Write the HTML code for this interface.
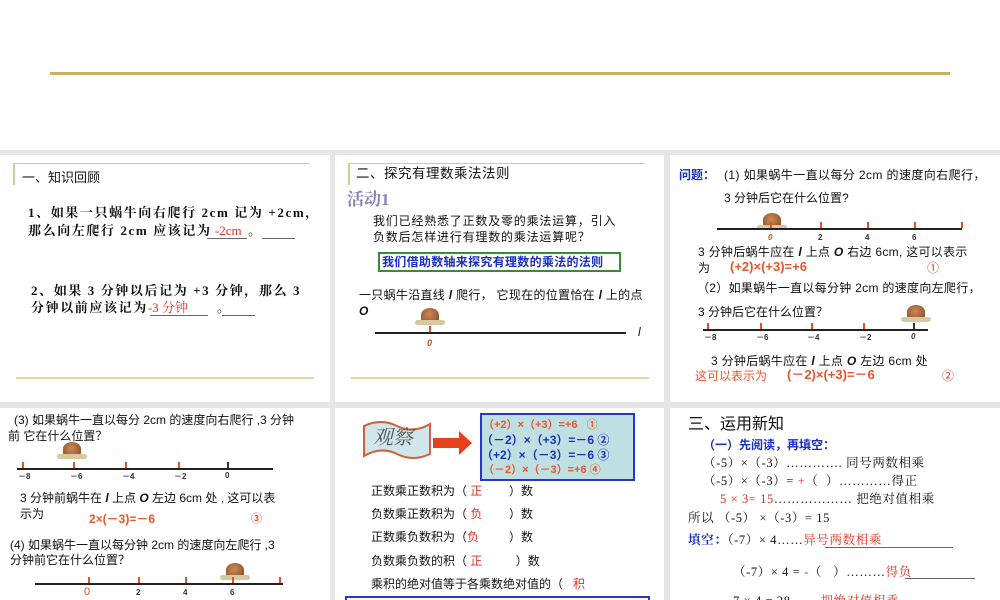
<!DOCTYPE html>
<html><head><meta charset="utf-8"><style>
*{margin:0;padding:0;box-sizing:border-box}
body{width:1000px;height:600px;overflow:hidden;background:#fff;font-family:"Liberation Sans","Noto Sans CJK SC",sans-serif;position:relative;color:#111}
.bg{position:absolute;left:0;top:150px;width:1000px;height:450px;background:#e6e6e6}
.p{position:absolute;background:#fff;overflow:hidden}
.t{position:absolute;white-space:nowrap;font-size:12px;line-height:14px}
.s{font-family:"Liberation Serif","Noto Serif CJK SC",serif;font-weight:bold;font-size:13px;letter-spacing:1.6px}
.r{color:#e0301e}
.o{color:#e8552a;font-weight:bold}
.b{color:#1a2fc0}
.g{position:absolute;height:2px;background:#e6d6a6}
.ax{position:absolute;height:1.5px;background:#222}
.tk{position:absolute;width:1.5px;height:6px;background:#e0502a}
.lb{position:absolute;font-size:8px;font-weight:bold;color:#333}
.snail{position:absolute;width:18px;height:14px;border-radius:50% 50% 20% 20%;background:radial-gradient(circle at 45% 45%,#c98a5a,#8a4a22);}
.snail:after{content:"";position:absolute;left:-6px;bottom:-3px;width:30px;height:5px;background:#d8c8a0;border-radius:3px}
.ul{position:absolute;height:1px;background:#667}
.sf{font-family:"Liberation Serif","Noto Serif CJK SC",serif;font-size:12.5px;letter-spacing:0.6px}
</style></head><body>
<div style="position:absolute;left:50px;top:72px;width:900px;height:3px;background:#c8b060"></div>
<div class="bg"></div>

<!-- panel 1 -->
<div class="p" style="left:0;top:155px;width:330px;height:247px">
 <div class="g" style="left:13px;top:8px;width:297px;height:1px;background:#dcc890"></div>
 <div class="g" style="left:13px;top:8px;width:1.5px;height:22px;background:#dcc890"></div>
 <div class="t" style="left:22px;top:16px;font-size:13px">一、知识回顾</div>
 <div class="t s" style="left:28px;top:51px">1、如果一只蜗牛向右爬行 2cm 记为 +2cm，</div>
 <div class="t s" style="left:28px;top:69px">那么向左爬行 2cm 应该记为<span class="r" style="font-weight:normal;letter-spacing:0">&nbsp;-2cm&nbsp;&nbsp;</span>。</div>
 <div class="ul" style="left:207px;top:83px;width:40px"></div>
 <div class="ul" style="left:262px;top:83px;width:33px"></div>
 <div class="t s" style="left:31px;top:129px">2、如果 3 分钟以后记为 +3 分钟，那么 3</div>
 <div class="t s" style="left:31px;top:146px">分钟以前应该记为<span class="r" style="font-weight:normal;letter-spacing:0">-3 分钟</span>&nbsp;&nbsp;&nbsp;&nbsp;&nbsp;&nbsp;。</div>
 <div class="ul" style="left:150px;top:160px;width:58px"></div>
 <div class="ul" style="left:222px;top:160px;width:33px"></div>
 <div class="g" style="left:16px;top:222px;width:298px"></div>
</div>

<!-- panel 2 -->
<div class="p" style="left:335px;top:155px;width:329px;height:247px">
 <div class="g" style="left:13px;top:8px;width:297px;height:1px;background:#dcc890"></div>
 <div class="g" style="left:13px;top:8px;width:1.5px;height:22px;background:#dcc890"></div>
 <div class="t" style="left:21px;top:12px;font-size:13.5px;letter-spacing:0.5px">二、探究有理数乘法法则</div>
 <div class="t" style="left:12px;top:35px;font-size:17px;line-height:20px;color:#8a80b8;font-weight:bold;font-family:'Liberation Serif','Noto Serif CJK SC',serif">活动1</div>
 <div class="t" style="left:38px;top:59px;letter-spacing:0.8px">我们已经熟悉了正数及零的乘法运算，引入</div>
 <div class="t" style="left:38px;top:75px;letter-spacing:0.8px">负数后怎样进行有理数的乘法运算呢？</div>
 <div style="position:absolute;left:43px;top:97px;width:243px;height:20px;border:2px solid #3a8a3a"></div>
 <div class="t b" style="left:47px;top:100px;font-weight:bold;letter-spacing:0.3px">我们借助数轴来探究有理数的乘法的法则</div>
 <div class="t" style="left:24px;top:133px;letter-spacing:0.3px">一只蜗牛沿直线 <i><b>l</b></i> 爬行， 它现在的位置恰在 <i><b>l</b></i> 上的点</div>
 <div class="t" style="left:24px;top:149px"><i><b>O</b></i></div>
 <div class="snail" style="left:86px;top:153px"></div>
 <div class="ax" style="left:40px;top:177px;width:251px"></div>
 <div class="tk" style="left:94px;top:171px;height:6px"></div>
 <div class="t" style="left:92px;top:181px;font-size:9px;color:#c05020;font-style:italic;font-weight:bold">0</div>
 <div class="t" style="left:303px;top:170px;font-style:italic">l</div>
 <div class="g" style="left:16px;top:222px;width:298px"></div>
</div>

<!-- panel 3 -->
<div class="p" style="left:670px;top:155px;width:330px;height:247px">
 <div class="t b" style="left:9px;top:13px;font-weight:bold">问题：</div>
 <div class="t" style="left:54px;top:13px;letter-spacing:0.4px">(1) 如果蜗牛一直以每分 2cm 的速度向右爬行，</div>
 <div class="t" style="left:54px;top:36px">3 分钟后它在什么位置?</div>
 <div class="snail" style="left:93px;top:58px"></div>
 <div class="ax" style="left:47px;top:73px;width:245px"></div>
 <div class="tk" style="left:100px;top:67px"></div><div class="tk" style="left:150px;top:67px"></div><div class="tk" style="left:197px;top:67px"></div><div class="tk" style="left:244px;top:67px"></div><div class="tk" style="left:291px;top:67px"></div>
 <div class="lb" style="left:98px;top:78px;color:#c05020;font-style:italic">0</div><div class="lb" style="left:148px;top:78px">2</div><div class="lb" style="left:195px;top:78px">4</div><div class="lb" style="left:242px;top:78px">6</div>
 <div class="t" style="left:28px;top:90px;letter-spacing:0.3px">3 分钟后蜗牛应在 <i><b>l</b></i> 上点 <i><b>O</b></i> 右边 6cm, 这可以表示</div>
 <div class="t" style="left:28px;top:106px">为</div>
 <div class="t o" style="left:60px;top:105px;font-size:13px">(+2)×(+3)=+6</div>
 <div class="t r" style="left:257px;top:106px">①</div>
 <div class="t" style="left:27px;top:126px;letter-spacing:0.3px">（2）如果蜗牛一直以每分钟 2cm 的速度向左爬行，</div>
 <div class="t" style="left:28px;top:150px">3 分钟后它在什么位置？</div>
 <div class="snail" style="left:237px;top:150px"></div>
 <div class="ax" style="left:33px;top:174px;width:225px"></div>
 <div class="tk" style="left:37px;top:168px"></div><div class="tk" style="left:90px;top:168px"></div><div class="tk" style="left:141px;top:168px"></div><div class="tk" style="left:193px;top:168px"></div><div class="tk" style="left:243px;top:168px;background:#333"></div>
 <div class="lb" style="left:34px;top:177px">－8</div><div class="lb" style="left:86px;top:177px">－6</div><div class="lb" style="left:137px;top:177px">－4</div><div class="lb" style="left:189px;top:177px">－2</div><div class="lb" style="left:241px;top:177px;font-style:italic">0</div>
 <div class="t" style="left:41px;top:199px;letter-spacing:0.3px">3 分钟后蜗牛应在 <i><b>l</b></i> 上点 <i><b>O</b></i> 左边 6cm 处</div>
 <div class="t" style="left:25px;top:214px;color:#e8552a">这可以表示为</div>
 <div class="t o" style="left:117px;top:213px;font-size:13px">(－2)×(+3)=－6</div>
 <div class="t r" style="left:272px;top:214px">②</div>
</div>

<!-- row2 panel1 -->
<div class="p" style="left:0;top:408px;width:330px;height:192px">
 <div class="t" style="left:14px;top:5px">(3) 如果蜗牛一直以每分 2cm 的速度向右爬行 ,3 分钟</div>
 <div class="t" style="left:8px;top:21px">前 它在什么位置？</div>
 <div class="snail" style="left:63px;top:34px"></div>
 <div class="ax" style="left:17px;top:60px;width:256px"></div>
 <div class="tk" style="left:22px;top:54px"></div><div class="tk" style="left:73px;top:54px"></div><div class="tk" style="left:125px;top:54px"></div><div class="tk" style="left:178px;top:54px"></div><div class="tk" style="left:227px;top:54px;background:#333"></div>
 <div class="lb" style="left:18px;top:63px">－8</div><div class="lb" style="left:70px;top:63px">－6</div><div class="lb" style="left:122px;top:63px">－4</div><div class="lb" style="left:174px;top:63px">－2</div><div class="lb" style="left:225px;top:63px">0</div>
 <div class="t" style="left:20px;top:83px">3 分钟前蜗牛在 <i><b>l</b></i> 上点 <i><b>O</b></i> 左边 6cm 处 , 这可以表</div>
 <div class="t" style="left:20px;top:99px">示为</div>
 <div class="t o" style="left:89px;top:104px;font-size:12px">2×(－3)=－6</div>
 <div class="t o" style="left:251px;top:104px;font-size:11px">③</div>
 <div class="t" style="left:10px;top:130px">(4) 如果蜗牛一直以每分钟 2cm 的速度向左爬行 ,3</div>
 <div class="t" style="left:10px;top:145px">分钟前它在什么位置？</div>
 <div class="snail" style="left:226px;top:155px"></div>
 <div class="ax" style="left:35px;top:175px;width:248px"></div>
 <div class="tk" style="left:88px;top:169px"></div><div class="tk" style="left:138px;top:169px"></div><div class="tk" style="left:185px;top:169px"></div><div class="tk" style="left:232px;top:169px"></div><div class="tk" style="left:279px;top:169px"></div>
 <div class="t" style="left:84px;top:177px;font-size:11px;color:#c05020">0</div><div class="lb" style="left:136px;top:180px">2</div><div class="lb" style="left:183px;top:180px">4</div><div class="lb" style="left:230px;top:180px">6</div>
</div>

<!-- row2 panel2 -->
<div class="p" style="left:335px;top:408px;width:329px;height:192px">
 <svg style="position:absolute;left:26px;top:10px" width="72" height="46"><path d="M3 8 Q20 0 36 8 T69 6 L69 36 Q52 44 36 36 T3 38 Z" fill="#cfe6ea" stroke="#d2603a" stroke-width="2"/></svg>
 <div class="t" style="left:38px;top:18px;font-size:20px;line-height:24px;font-family:'Liberation Serif','Noto Serif CJK SC',serif;color:#555;font-style:italic">观察</div>
 <div style="position:absolute;left:98px;top:30px;width:26px;height:10px;background:#e8401a"></div>
 <div style="position:absolute;left:124px;top:23px;border-left:13px solid #e8401a;border-top:12px solid transparent;border-bottom:12px solid transparent"></div>
 <div style="position:absolute;left:145px;top:5px;width:155px;height:68px;background:#bfe0e2;border:2px solid #2a36c8"></div>
 <div class="t o" style="left:148px;top:10px;font-size:11px">（+2）×（+3）=+6&nbsp;&nbsp;&nbsp;①</div>
 <div class="t b" style="left:146px;top:25px;font-size:12px;font-weight:bold">（－2）×（+3）=－6 ②</div>
 <div class="t b" style="left:146px;top:40px;font-size:12px;font-weight:bold">（+2）×（－3）=－6 ③</div>
 <div class="t o" style="left:148px;top:55px;font-size:11px">（－2）×（－3）=+6 ④</div>
 <div class="t" style="left:36px;top:76px">正数乘正数积为（ <span class="r">正</span>&nbsp;&nbsp;&nbsp;&nbsp;&nbsp;&nbsp;&nbsp;&nbsp;）数</div>
 <div class="t" style="left:36px;top:99px">负数乘正数积为（ <span class="r">负</span>&nbsp;&nbsp;&nbsp;&nbsp;&nbsp;&nbsp;&nbsp;&nbsp;）数</div>
 <div class="t" style="left:36px;top:122px">正数乘负数积为（<span class="r">负</span>&nbsp;&nbsp;&nbsp;&nbsp;&nbsp;&nbsp;&nbsp;&nbsp;&nbsp;）数</div>
 <div class="t" style="left:36px;top:146px">负数乘负数的积（ <span class="r">正</span>&nbsp;&nbsp;&nbsp;&nbsp;&nbsp;&nbsp;&nbsp;&nbsp;&nbsp;&nbsp;）数</div>
 <div class="t" style="left:36px;top:169px">乘积的绝对值等于各乘数绝对值的（&nbsp;&nbsp;&nbsp;<span class="r">积</span></div>
 <div style="position:absolute;left:10px;top:188px;width:305px;height:10px;border:2px solid #2a36c8;background:#fffbe0"></div>
</div>

<!-- row2 panel3 -->
<div class="p" style="left:670px;top:408px;width:330px;height:192px">
 <div class="t" style="left:18px;top:8px;font-size:16px;line-height:18px">三、运用新知</div>
 <div class="t b" style="left:33px;top:30px;font-weight:bold">（一）先阅读，再填空：</div>
 <div class="t sf" style="left:33px;top:48px">（-5）×（-3）…………. 同号两数相乘</div>
 <div class="t sf" style="left:33px;top:66px">（-5）×（-3）= <span class="r">+</span>（&nbsp;&nbsp;）…………得正</div>
 <div class="t sf" style="left:50px;top:84px"><span class="r">5 × 3= 15</span>……………… 把绝对值相乘</div>
 <div class="t sf" style="left:18px;top:103px">所以 （-5） ×（-3）= 15</div>
 <div class="t sf" style="left:18px;top:125px"><span class="b" style="font-weight:bold">填空：</span>（-7）× 4……<span class="r">异号两数相乘</span></div>
 <div class="ul" style="left:155px;top:139px;width:128px"></div>
 <div class="t sf" style="left:63px;top:157px">（-7）× 4 = <span class="r">-</span>（&nbsp;&nbsp;&nbsp;）………<span class="r">得负</span></div>
 <div class="ul" style="left:235px;top:170px;width:70px"></div>
 <div class="t sf" style="left:63px;top:186px">7 × 4 = 28 ……<span class="r">把绝对值相乘</span></div>
</div>
</body></html>
